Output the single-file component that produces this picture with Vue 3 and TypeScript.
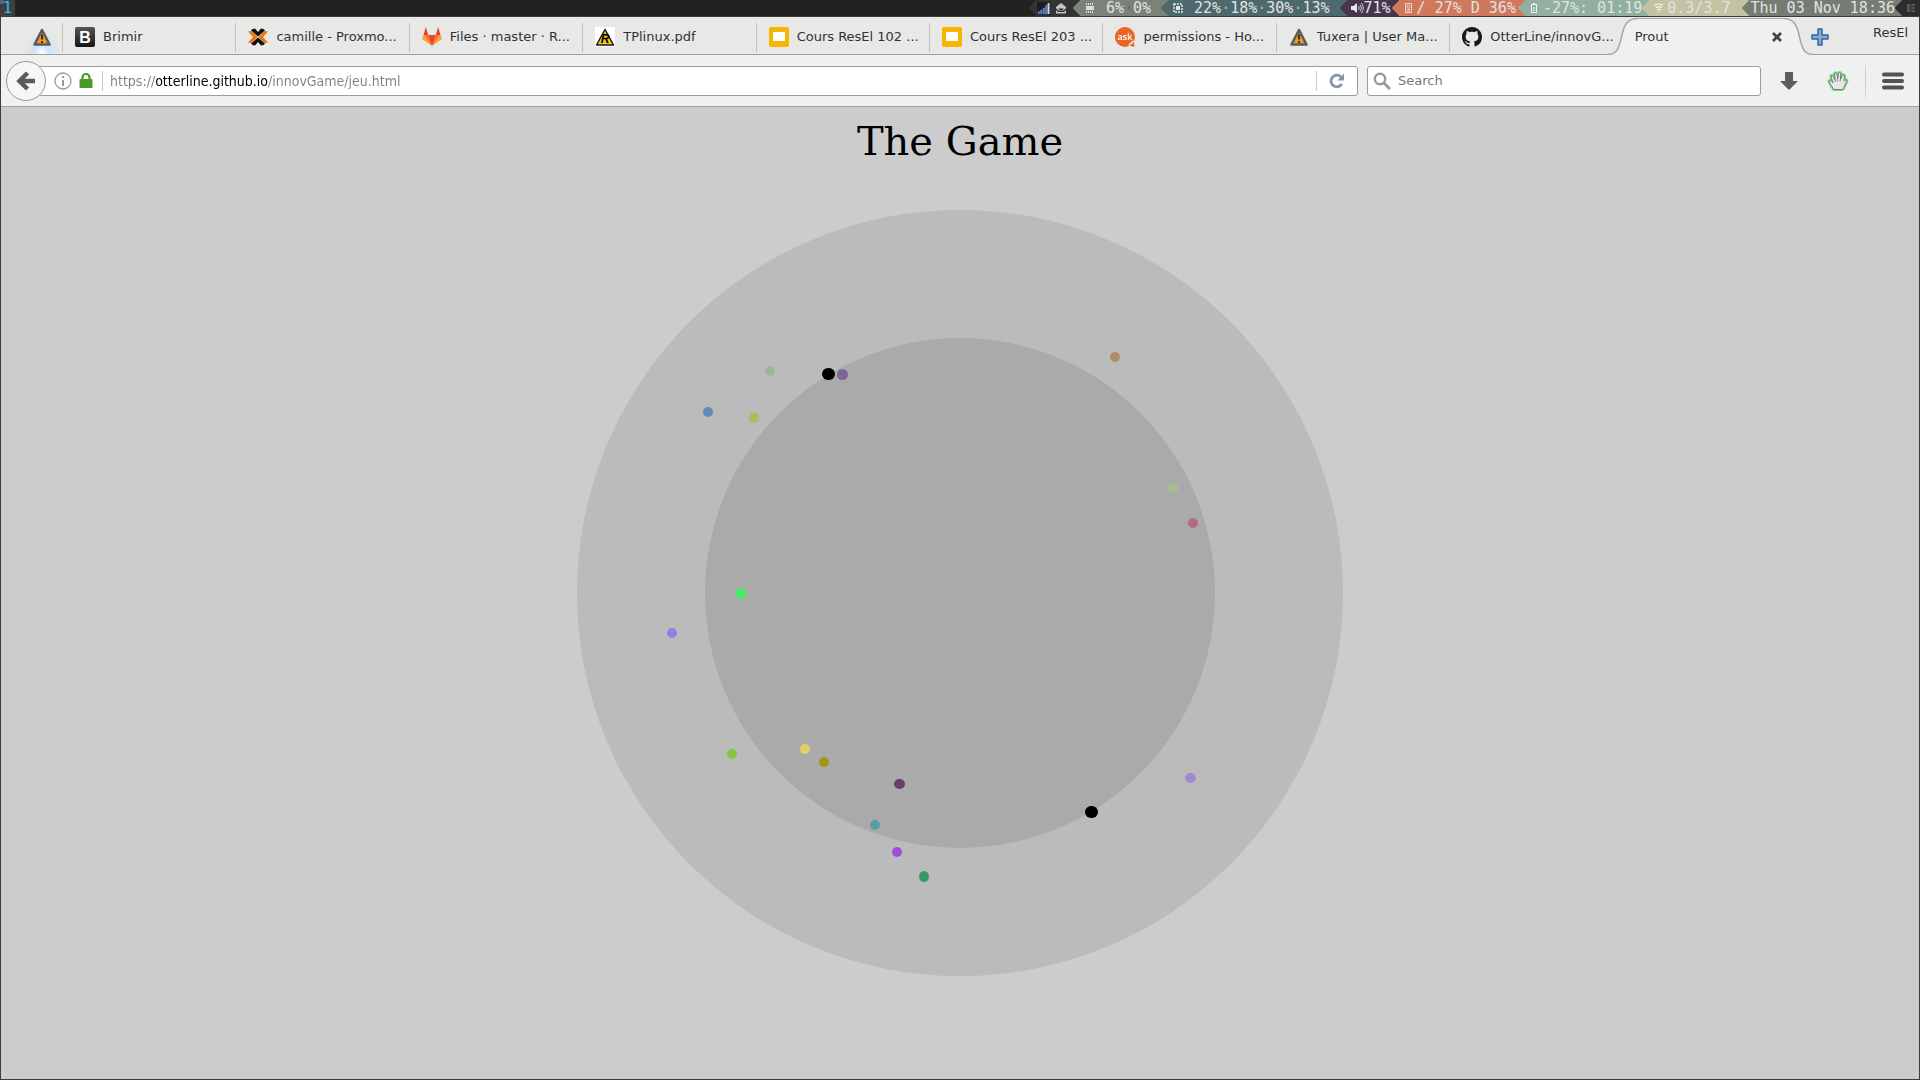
<script setup lang="ts">
interface Tab {
  title: string
  icon: string
}

interface Dot {
  x: number
  y: number
  rx: number
  ry: number
  color: string
}

interface Segment {
  name: string
  icon: string
  parts: string[]
}

const tabs: Tab[] = [
  { title: 'Brimir', icon: 'brimir' },
  { title: 'camille - Proxmo...', icon: 'proxmox' },
  { title: 'Files · master · R...', icon: 'gitlab' },
  { title: 'TPlinux.pdf', icon: 'resel' },
  { title: 'Cours ResEl 102 ...', icon: 'slides' },
  { title: 'Cours ResEl 203 ...', icon: 'slides' },
  { title: 'permissions - Ho...', icon: 'ask' },
  { title: 'Tuxera | User Ma...', icon: 'warning' },
  { title: 'OtterLine/innovG...', icon: 'github' },
]

const segments: Segment[] = [
  { name: 'memory', icon: 'memory', parts: ['6%', '0%'] },
  { name: 'cpu', icon: 'cpu', parts: ['22%', '18%', '30%', '13%'] },
  { name: 'volume', icon: 'speaker', parts: ['71%'] },
  { name: 'disk', icon: 'disk', parts: ['/ 27% D 36%'] },
  { name: 'battery', icon: 'battery', parts: ['-27%: 01:19'] },
  { name: 'wifi', icon: 'wifi', parts: ['0.3/3.7'] },
  { name: 'clock', icon: '', parts: ['Thu 03 Nov 18:36'] },
]

const dots: Dot[] = [
  { x: 194, y: 162, rx: 5, ry: 5, color: '#9cb69c' },
  { x: 132, y: 203, rx: 5, ry: 5, color: '#5c8abb' },
  { x: 178, y: 208.5, rx: 5, ry: 5.5, color: '#a5be63' },
  { x: 266.5, y: 165.5, rx: 5.5, ry: 5.5, color: '#7f659c' },
  { x: 539, y: 148, rx: 5, ry: 5, color: '#ad8d69' },
  { x: 597, y: 279, rx: 5, ry: 5, color: '#a9be8e' },
  { x: 617, y: 314, rx: 5, ry: 5, color: '#b56c82' },
  { x: 165, y: 384.5, rx: 5, ry: 5.5, color: '#44ef66' },
  { x: 96, y: 424, rx: 5, ry: 5, color: '#997ee4' },
  { x: 156, y: 545, rx: 5, ry: 5, color: '#86c540' },
  { x: 229, y: 540, rx: 5, ry: 5, color: '#e0d06a' },
  { x: 248, y: 553, rx: 5, ry: 5, color: '#a39413' },
  { x: 323.5, y: 575, rx: 5.5, ry: 5, color: '#683f6b' },
  { x: 299, y: 616, rx: 5, ry: 5, color: '#56a0a2' },
  { x: 321, y: 643, rx: 5, ry: 5, color: '#a24bdf' },
  { x: 348, y: 667.5, rx: 5, ry: 5.5, color: '#349968' },
  { x: 614.5, y: 569, rx: 5.5, ry: 5, color: '#a18bce' },
]

const players = [
  { x: 246, y: 159 },
  { x: 509, y: 597 },
]
</script>

<template>
  <div class="desktop">
    <header class="bar">
      <button class="workspace" type="button">1</button>
      <div class="status">
        <div class="segment tray">
          <span class="arrow"></span>
          <svg class="signal" width="13" height="13" viewBox="0 0 13 13" aria-hidden="true">
            <rect width="13" height="13" fill="#1c1c1c" />
            <path d="M1 12V9.500h1.500V12zM3.500 12V8H5v4zM6 12V6h1.500v6zM8.300 12V3.500h1.500V12z" fill="#5b86d0" stroke="#5b86d0" stroke-width=".5" />
            <path d="M10.500 12V1H12.500v11z" fill="#d8d8d8" />
          </svg>
          <svg width="12" height="12" viewBox="0 0 12 12" aria-hidden="true">
            <path d="M6 1l5 4v1.200L8.500 8.500h-5L1 6.200V5zM1 8l2 2h6l2-2v3.500H1z" fill="#c4c4c4" />
            <path d="M3.200 6.500h5.600L7.500 8h-3z" fill="#333" />
          </svg>
        </div>
        <div v-for="s in segments" :key="s.name" class="segment" :class="s.name">
          <span class="arrow"></span>
          <svg v-if="s.icon === 'memory'" width="10" height="10" viewBox="0 0 10 10" aria-hidden="true">
            <path d="M1 3h8v4H1z" fill="#ddd" />
            <path d="M1.500 0v2M3.500 0v2M5.500 0v2M7.500 0v2M1.500 8v2M3.500 8v2M5.500 8v2M7.500 8v2" stroke="#ddd" />
          </svg>
          <svg v-else-if="s.icon === 'cpu'" width="10" height="10" viewBox="0 0 10 10" aria-hidden="true">
            <path d="M3 3h4v4H3z" fill="#e4e4e4" />
            <rect x="1" y="1" width="8" height="8" fill="none" stroke="#e4e4e4" stroke-width="1.500" stroke-dasharray="2 1" />
          </svg>
          <svg v-else-if="s.icon === 'speaker'" width="14" height="12" viewBox="0 0 14 12" aria-hidden="true">
            <path d="M1 4h2.500L7 1v10L3.500 8H1z" fill="#e8e8e8" />
            <path d="M8.500 4q1.500 2 0 4M10 2.500q3 3.500 0 7M11.500 1q3.500 5 0 10" fill="none" stroke="#d0ccd2" />
          </svg>
          <svg v-else-if="s.icon === 'disk'" width="10" height="10" viewBox="0 0 10 10" aria-hidden="true">
            <path d="M1.500.5h6v9h-6z" fill="none" stroke="#ecd5cd" />
            <circle cx="4.500" cy="3.500" r="1.500" fill="none" stroke="#ecd5cd" />
            <path d="M3 6.500h3M3 8h3" stroke="#ecd5cd" />
          </svg>
          <svg v-else-if="s.icon === 'battery'" width="10" height="10" viewBox="0 0 10 10" aria-hidden="true">
            <path d="M1.500 1.500h5v8h-5zM3 .5h2" fill="none" stroke="#f4f4f4" />
            <path d="M3.500 4h1v4h-1z" fill="#f4f4f4" />
          </svg>
          <svg v-else-if="s.icon === 'wifi'" width="10" height="10" viewBox="0 0 10 10" aria-hidden="true">
            <path d="M.5 2.500q4.500-3 9 0M2 4.800q3-2.300 6 0M3.200 7q1.800-1.500 3.600 0M4.500 8.500h1" fill="none" stroke="#fafaf4" stroke-width="1.200" />
          </svg>
          <span class="reading"><template v-for="(p, i) in s.parts" :key="i"><i v-if="i > 0">·</i>{{ p }}</template></span>
        </div>
        <div class="segment layout">
          <span class="arrow"></span>
          <svg width="8" height="8" viewBox="0 0 8 8" aria-hidden="true">
            <path d="M0 0h3v8H0zM4 0h4v2H4zM4 3h4v2H4zM4 6h4v2H4z" fill="#555" />
          </svg>
        </div>
      </div>
    </header>

    <div class="window">
      <nav class="tabstrip" aria-label="Tabs">
        <button class="pinned" type="button" aria-label="Pinned tab">
          <svg width="20" height="20" viewBox="0 0 20 20" aria-hidden="true">
            <path d="M10 3L17.500 17.500h-15z" fill="#f09a2c" stroke="#5c5c58" stroke-width="2.600" stroke-linejoin="round" />
            <path d="M10 7.500v5M10 14v2" stroke="#45310f" stroke-width="2" />
          </svg>
        </button>
        <div class="tabs">
          <button v-for="t in tabs" :key="t.title" class="tab" type="button">
            <svg v-if="t.icon === 'brimir'" class="icon" viewBox="0 0 20 20" aria-hidden="true">
              <defs>
                <linearGradient id="brimir" x2="0" y2="1">
                  <stop offset="0" stop-color="#555" />
                  <stop offset="1" stop-color="#161616" />
                </linearGradient>
              </defs>
              <rect width="20" height="20" rx="2" fill="url(#brimir)" />
              <text x="10" y="16" text-anchor="middle" font-family="Liberation Sans, sans-serif" font-weight="700" font-size="16" fill="#fff">B</text>
            </svg>
            <svg v-else-if="t.icon === 'proxmox'" class="icon" viewBox="0 0 20 20" aria-hidden="true">
              <path d="M3 3.500Q4 1.500 7 1.500l3 3.500 3-3.500q3 0 4 2L10 9.500zM3 16.500q1 2 4 2l3-3.500 3 3.500q3 0 4-2L10 10.500z" fill="#111" />
              <path d="M0 4.500q3-1.200 5 .5l4.500 5L5 15q-2 1.700-5 .5L5 10zM20 4.500q-3-1.200-5 .5l-4.500 5L15 15q2 1.700 5 .5L15 10z" fill="#e87813" />
            </svg>
            <svg v-else-if="t.icon === 'gitlab'" class="icon" viewBox="0 0 20 20" aria-hidden="true">
              <path d="M10 19L0 12l1.500-4z" fill="#fca33a" />
              <path d="M10 19l10-7-1.500-4z" fill="#fca33a" />
              <path d="M10 19L1.500 8h5zM10 19l8.500-11h-5z" fill="#fb7030" />
              <path d="M10 19L6.300 8h7.400zM1.500 8l2.300-8 2.500 8zM18.500 8l-2.300-8-2.500 8z" fill="#e2472c" />
            </svg>
            <svg v-else-if="t.icon === 'resel'" class="icon" viewBox="0 0 20 20" aria-hidden="true">
              <rect width="20" height="20" fill="#fff" />
              <path d="M10 2.500L18.500 18h-17z" fill="#f7c916" stroke="#1b1b1b" stroke-width="1.500" stroke-linejoin="round" />
              <text x="10" y="16" text-anchor="middle" font-family="Liberation Sans, sans-serif" font-style="italic" font-weight="700" font-size="12">R</text>
            </svg>
            <svg v-else-if="t.icon === 'slides'" class="icon" viewBox="0 0 20 20" aria-hidden="true">
              <rect width="20" height="20" rx="2" fill="#f6b500" />
              <path d="M4 5h12v9H4z" fill="#fff" />
            </svg>
            <svg v-else-if="t.icon === 'ask'" class="icon" viewBox="0 0 20 20" aria-hidden="true">
              <path d="M10 0a10 10 0 1 1-.1 20A10 10 0 0 1 10 0zM13 18l6.500 2-1-7z" fill="#e96625" />
              <text x="10" y="13" text-anchor="middle" font-family="Open Sans, sans-serif" font-weight="600" font-size="9" fill="#fff">ask</text>
            </svg>
            <svg v-else-if="t.icon === 'warning'" class="icon" viewBox="0 0 20 20" aria-hidden="true">
              <path d="M10 3L17.500 17.500h-15z" fill="#f09a2c" stroke="#5c5c58" stroke-width="2.600" stroke-linejoin="round" />
              <path d="M10 7.500v5M10 14v2" stroke="#45310f" stroke-width="2" />
            </svg>
            <svg v-else class="icon" viewBox="0 0 16 16" aria-hidden="true">
              <path fill="#191717" d="M8 0C3.580 0 0 3.580 0 8c0 3.540 2.290 6.530 5.470 7.590.4.070.55-.17.55-.38 0-.19-.01-.82-.01-1.490-2.010.37-2.530-.49-2.690-.94-.09-.23-.48-.94-.82-1.130-.28-.15-.68-.52-.01-.53.63-.01 1.080.58 1.230.82.72 1.210 1.870.87 2.330.66.07-.52.28-.87.51-1.070-1.780-.2-3.640-.89-3.640-3.950 0-.87.31-1.590.82-2.150-.08-.2-.36-1.020.08-2.120 0 0 .67-.21 2.200.82.64-.18 1.320-.27 2-.27s1.360.09 2 .27c1.530-1.040 2.200-.82 2.200-.82.44 1.100.16 1.920.08 2.120.51.56.82 1.270.82 2.150 0 3.070-1.870 3.750-3.650 3.950.29.25.54.73.54 1.480 0 1.070-.01 1.930-.01 2.200 0 .21.15.46.55.38A8.010 8.010 0 0 0 16 8c0-4.420-3.580-8-8-8z" />
            </svg>
            <span class="title">{{ t.title }}</span>
          </button>
          <div class="tab active">
            <div class="shape" aria-hidden="true">
              <svg width="30" height="38" viewBox="0 0 30 38">
                <path d="M0 38V37.500C9 37.500 11 31 13.500 20 16 8 19 1.500 30 1.500V38z" fill="#f0f0f0" />
                <path d="M0 37.500C9 37.500 11 31 13.500 20 16 8 19 1.500 30 1.500" fill="none" stroke="#a0a7ae" stroke-width="1.500" />
              </svg>
              <span class="crown"></span>
              <svg width="30" height="38" viewBox="0 0 30 38">
                <path d="M30 38V37.500C21 37.500 19 31 16.500 20 14 8 11 1.500 0 1.500V38z" fill="#f0f0f0" />
                <path d="M30 37.500C21 37.500 19 31 16.500 20 14 8 11 1.500 0 1.500" fill="none" stroke="#a0a7ae" stroke-width="1.500" />
              </svg>
            </div>
            <span class="title">Prout</span>
            <button class="close" type="button" aria-label="Close tab">
              <svg width="12" height="12" viewBox="0 0 12 12" aria-hidden="true">
                <path d="M2 2l8 8M10 2l-8 8" stroke="#3f4649" stroke-width="2.800" />
              </svg>
            </button>
          </div>
        </div>
        <div class="strip-end">
          <button class="plain" type="button" aria-label="New tab">
            <svg width="18" height="18" viewBox="0 0 18 18" aria-hidden="true">
              <path d="M7 1h4v6h6v4h-6v6H7v-6H1V7h6z" fill="#86abd9" stroke="#3465a4" stroke-width="1.500" stroke-linejoin="round" />
            </svg>
          </button>
          <span class="group">ResEl</span>
        </div>
      </nav>

      <div class="toolbar">
        <button class="back" type="button" aria-label="Back">
          <svg width="20" height="20" viewBox="0 0 20 20" aria-hidden="true">
            <path d="M11.500 2L3.500 10l8 8M4 10h15" fill="none" stroke="#5a5a5a" stroke-width="4.500" />
          </svg>
        </button>
        <div class="field address">
          <svg width="18" height="18" viewBox="0 0 18 18" aria-hidden="true">
            <circle cx="9" cy="9" r="8" fill="none" stroke="#999" stroke-width="1.300" />
            <path d="M9 4v2M9 8v6" stroke="#999" stroke-width="2" />
          </svg>
          <svg class="lock" width="14" height="16" viewBox="0 0 14 16" aria-hidden="true">
            <path d="M3.500 7V4.500a3.500 3.500 0 0 1 7 0V7" fill="none" stroke="#4b9a28" stroke-width="2.200" />
            <rect x=".5" y="6" width="13" height="9" rx="1" fill="#4b9a28" />
          </svg>
          <span class="rule"></span>
          <input class="url" type="text" aria-label="Address" value="https://otterline.github.io/innovGame/jeu.html" />
          <span class="rule"></span>
          <button class="plain reload" type="button" aria-label="Reload">
            <svg width="16" height="16" viewBox="0 0 16 16" aria-hidden="true">
              <path d="M12.800 11A5.800 5.800 0 1 1 12 4" fill="none" stroke="#8795a4" stroke-width="2.800" />
              <path d="M15 .5V7.500H8.500z" fill="#8795a4" />
            </svg>
          </button>
        </div>
        <div class="field search">
          <svg width="18" height="18" viewBox="0 0 18 18" aria-hidden="true">
            <circle cx="7" cy="7" r="5.200" fill="none" stroke="#999" stroke-width="2.400" />
            <path d="M11 11l6 6" stroke="#999" stroke-width="3" />
          </svg>
          <input type="text" aria-label="Search" placeholder="Search" />
        </div>
        <div class="actions">
          <button class="plain" type="button" aria-label="Downloads">
            <svg width="20" height="20" viewBox="0 0 20 20" aria-hidden="true">
              <path d="M6 1h8v9h5l-9 9-9-9h5z" fill="#5e5e5e" />
            </svg>
          </button>
          <button class="plain" type="button" aria-label="Content blocker">
            <svg width="22" height="22" viewBox="0 0 22 22" aria-hidden="true">
              <g stroke-linejoin="round">
                <path d="M7 19.500C5 17 3.500 14.500 2 11.500c0-1.500 1.500-1.500 2.500 0L6 13 4 6.500C4 5 5.500 5 6.200 6.500L8 10 7.500 4C7.500 2.500 9.500 2.500 10 4l.7 5L11.500 3.500c.3-1.500 2.200-1.300 2.200.2L13.500 9.500 15.500 5.500c.8-1.200 2.400-.5 2 1L17 11l1.500-1c1-.5 1.800.5 1.200 1.500L17.500 16q-.5 2-2 3.500z" fill="#6ce681" stroke="#5fe377" stroke-width="3" />
                <path d="M7 19.500C5 17 3.500 14.500 2 11.500c0-1.500 1.500-1.500 2.500 0L6 13 4 6.500C4 5 5.500 5 6.200 6.500L8 10 7.500 4C7.500 2.500 9.500 2.500 10 4l.7 5L11.500 3.500c.3-1.500 2.200-1.300 2.200.2L13.500 9.500 15.500 5.500c.8-1.200 2.400-.5 2 1L17 11l1.500-1c1-.5 1.800.5 1.200 1.500L17.500 16q-.5 2-2 3.500z" fill="#e8e8e8" stroke="#7b7b7b" />
                <path d="M8 10l.5 2M10.700 9v2.500M13.500 9.500l-.5 2" fill="none" stroke="#8b8b8b" />
              </g>
            </svg>
          </button>
          <span class="divider"></span>
          <button class="plain" type="button" aria-label="Menu">
            <svg width="22" height="18" viewBox="0 0 22 18" aria-hidden="true">
              <path d="M2 2.500h18M2 9h18M2 15.500h18" stroke="#525252" stroke-width="4" stroke-linecap="round" />
            </svg>
          </button>
        </div>
      </div>

      <main class="page">
        <h1>The Game</h1>
        <svg class="arena" viewBox="0 0 768 768" role="img" aria-label="Game board">
          <circle cx="384" cy="384" r="383" fill="#bbb" />
          <circle cx="384" cy="384" r="255" fill="#aaa" />
          <ellipse v-for="(d, i) in dots" :key="i" :cx="d.x" :cy="d.y" :rx="d.rx" :ry="d.ry" :fill="d.color" />
          <rect v-for="(p, i) in players" :key="'p' + i" :x="p.x" :y="p.y" width="13" height="12" rx="6" />
        </svg>
      </main>
    </div>
  </div>
</template>

<style>
body {
  margin: 0;
  background: #ccc;
}
</style>

<style scoped>
.desktop {
  display: flex;
  flex-direction: column;
  min-height: 100vh;
  font-family: "DejaVu Sans", sans-serif;
  font-size: 13px;
  color: #2e3436;
}

button,
input {
  margin: 0;
  padding: 0;
  border: 0;
  background: none;
  font: inherit;
  color: inherit;
}

svg {
  display: block;
  flex: none;
}

.bar {
  display: flex;
  justify-content: space-between;
  height: 16px;
  background: #222;
  font: 15px/16px "DejaVu Sans Mono", monospace;
}

.workspace {
  width: 15px;
  background: linear-gradient(#5a6478, #5a6478) 0 0 / 4px 4px no-repeat #3f3f3f;
  color: #1cc4f4;
}

.status {
  display: flex;
}

.segment {
  display: flex;
  align-items: center;
  background: var(--tone);
  color: #e2e2e2;
  white-space: pre;
}

.arrow {
  align-self: stretch;
  width: 7px;
  margin-right: 5px;
  background: linear-gradient(to top right, var(--prev) 49%, transparent 51%) 0 100% / 7px 8px no-repeat,
    linear-gradient(to bottom right, var(--prev) 49%, transparent 51%) 0 0 / 7px 8px no-repeat;
}

.arrow + svg + .reading {
  margin-left: 3px;
}

.reading i {
  font-style: normal;
  color: #a9b4b0;
}

.tray {
  --prev: #222;
  --tone: #333;
  padding-right: 6px;
}

.tray .arrow {
  margin-right: 1px;
}

.tray .signal {
  margin-right: 5px;
}

.memory {
  --prev: #333;
  --tone: #7a8378;
  padding-right: 10px;
}

.memory .reading i {
  color: #4c6b70;
}

.cpu {
  --prev: #7a8378;
  --tone: #4e696d;
  padding-right: 10px;
}

.memory .arrow + svg + .reading,
.cpu .arrow + svg + .reading {
  margin-left: 11px;
}

.volume {
  --prev: #4e696d;
  --tone: #47374e;
  padding-right: 1px;
}

.volume .arrow {
  margin-right: 3px;
}

.volume .arrow + svg + .reading {
  margin-left: 0;
}

.disk {
  --prev: #47374e;
  --tone: #d0785c;
  padding-right: 2px;
}

.battery {
  --prev: #d0785c;
  --tone: #92b0a0;
}

.wifi {
  --prev: #92b0a0;
  --tone: #c2c3a3;
  padding-right: 11px;
}

.clock {
  --prev: #c2c3a3;
  --tone: #757d73;
}

.clock .arrow {
  margin-right: 2px;
}

.layout {
  --prev: #757d73;
  --tone: #2d2d2d;
  padding-right: 5px;
}

.window {
  display: flex;
  flex: 1;
  flex-direction: column;
  border: 1px solid #3c3c3c;
  background: #ccc;
}

.tabstrip {
  display: flex;
  height: 38px;
  box-shadow: inset 0 -1px #a0a0a0;
  background: #e8e8e6;
}

.pinned {
  display: flex;
  align-items: center;
  justify-content: center;
  width: 61px;
  padding: 2px 0 0 20px;
  background: radial-gradient(ellipse 18px 22px at 41px 36px, #fff 0, #cfe2fa 40%, transparent 100%) 0 0 / 100% 37px no-repeat;
}

.tabs {
  display: flex;
  flex: 1;
  min-width: 0;
}

.tab {
  position: relative;
  display: flex;
  flex: 1 1 0;
  align-items: center;
  min-width: 0;
  padding: 2px 8px 0 12px;
  text-align: left;
}

button.tab {
  padding-left: 13px;
  background: linear-gradient(#c0c0be, #c0c0be) 0 6px / 1px 29px no-repeat;
}

.icon {
  width: 20px;
  height: 20px;
  margin-right: 8px;
}

.title {
  overflow: hidden;
  white-space: nowrap;
  line-height: 20px;
}

.active .title {
  position: relative;
  flex: 1;
}

.shape {
  position: absolute;
  inset: 0 -18px 0 -15px;
  display: flex;
}

.crown {
  flex: 1;
  box-sizing: border-box;
  margin-top: 1px;
  border-top: 1px solid #a0a7ae;
  background: #f0f0f0;
}

.close {
  position: relative;
  padding: 4px;
}

.strip-end {
  display: flex;
  justify-content: space-between;
  align-items: center;
  width: 97px;
  padding: 2px 11px 0 16px;
}

.group {
  align-self: flex-start;
  padding-top: 4px;
  line-height: 20px;
}

.toolbar {
  display: flex;
  align-items: center;
  height: 51px;
  padding-left: 5px;
  border-bottom: 1px solid #a0a0a0;
  background: #f0f0f0;
}

.back {
  position: relative;
  z-index: 1;
  display: flex;
  flex: none;
  align-items: center;
  justify-content: center;
  width: 40px;
  height: 40px;
  border: 1px solid #999;
  border-radius: 50%;
  background: #f6f6f6;
}

.field {
  display: flex;
  align-items: center;
  box-sizing: border-box;
  height: 30px;
  border: 1px solid #9c9c9c;
  border-radius: 3px;
  background: #fff;
}

.field input {
  flex: 1;
  min-width: 0;
  height: 28px;
  outline: 0;
}

.address {
  flex: 1;
  min-width: 0;
  margin-left: -8px;
  padding-left: 15px;
}

.lock {
  margin: 0 9px 0 7px;
}

.rule {
  width: 1px;
  height: 20px;
  background: #ccc;
}

.field .url {
  margin-left: 7px;
  font-family: "DejaVu Sans Condensed", "DejaVu Sans", sans-serif;
  font-size: 14px;
  background: linear-gradient(90deg, #808080 45px, #000 45px 158px, #808080 158px);
  background-clip: text;
  -webkit-background-clip: text;
  -webkit-text-fill-color: transparent;
}

.plain {
  display: flex;
  align-items: center;
  justify-content: center;
}

.reload {
  width: 40px;
  height: 28px;
}

.search {
  flex: 0 1 394px;
  margin-left: 9px;
  padding-left: 5px;
}

.search input {
  margin-left: 7px;
}

.search input::placeholder {
  color: #777;
  opacity: 1;
}

.actions {
  display: flex;
  align-items: center;
  gap: 16px;
  padding: 0 15px 0 18px;
}

.actions .plain:nth-child(2) {
  margin-left: 12px;
}

.actions .divider {
  width: 1px;
  height: 44px;
  background: linear-gradient(transparent, #ccc 30% 70%, transparent);
}

.page {
  display: flex;
  flex: 1;
  flex-direction: column;
  align-items: center;
  background: #ccc;
}

h1 {
  margin: 10px 0 44px;
  font: 40px/48px "DejaVu Serif", serif;
  color: #000;
}

.arena {
  width: 40vw;
  height: auto;
}
</style>
